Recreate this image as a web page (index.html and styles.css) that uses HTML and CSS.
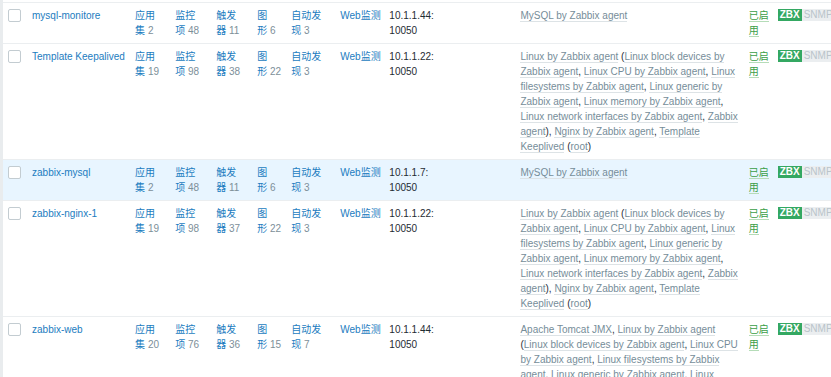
FILE: index.html
```html
<!DOCTYPE html>
<html lang="zh">
<head>
<meta charset="utf-8">
<title>主机</title>
<link rel="stylesheet" href="styles.css">
</head>
<body>
<div class="page">
  <div class="side"></div>
  <div class="main">
    <table class="list">
      <colgroup>
        <col class="c-cb"><col class="c-name"><col class="c-app"><col class="c-item"><col class="c-trig"><col class="c-graph"><col class="c-disc"><col class="c-web"><col class="c-if"><col class="c-tpl"><col class="c-st"><col class="c-av">
      </colgroup>
      <tbody>
        <tr>
          <td><span class="cb"></span></td>
          <td><a class="lnk">mysql-monitore</a></td>
          <td><a class="lnk">应用</a><br><a class="lnk">集</a> <span class="num">2</span></td>
          <td><a class="lnk">监控</a><br><a class="lnk">项</a> <span class="num">48</span></td>
          <td><a class="lnk">触发</a><br><a class="lnk">器</a> <span class="num">11</span></td>
          <td><a class="lnk">图</a><br><a class="lnk">形</a> <span class="num">6</span></td>
          <td><a class="lnk">自动发</a><br><a class="lnk">现</a> <span class="num">3</span></td>
          <td><a class="lnk">Web监测</a></td>
          <td class="ip">10.1.1.44:<br>10050</td>
          <td class="tpl"><a class="t">MySQL by Zabbix agent</a></td>
          <td><a class="st">已启</a><br><a class="st">用</a></td>
          <td class="av"><span class="b on">ZBX</span><span class="b off">SNMP</span><span class="b off">JMX</span><span class="b off">IPMI</span></td>
        </tr>
        <tr>
          <td><span class="cb"></span></td>
          <td><a class="lnk">Template Keepalived</a></td>
          <td><a class="lnk">应用</a><br><a class="lnk">集</a> <span class="num">19</span></td>
          <td><a class="lnk">监控</a><br><a class="lnk">项</a> <span class="num">98</span></td>
          <td><a class="lnk">触发</a><br><a class="lnk">器</a> <span class="num">38</span></td>
          <td><a class="lnk">图</a><br><a class="lnk">形</a> <span class="num">22</span></td>
          <td><a class="lnk">自动发</a><br><a class="lnk">现</a> <span class="num">3</span></td>
          <td><a class="lnk">Web监测</a></td>
          <td class="ip">10.1.1.22:<br>10050</td>
          <td class="tpl"><a class="t">Linux by Zabbix agent</a> (<a class="t">Linux block devices by Zabbix agent</a>, <a class="t">Linux CPU by Zabbix agent</a>, <a class="t">Linux filesystems by Zabbix agent</a>, <a class="t">Linux generic by Zabbix agent</a>, <a class="t">Linux memory by Zabbix agent</a>, <a class="t">Linux network interfaces by Zabbix agent</a>, <a class="t">Zabbix agent</a>), <a class="t">Nginx by Zabbix agent</a>, <a class="t">Template Keeplived</a> (<a class="t">root</a>)</td>
          <td><a class="st">已启</a><br><a class="st">用</a></td>
          <td class="av"><span class="b on">ZBX</span><span class="b off">SNMP</span><span class="b off">JMX</span><span class="b off">IPMI</span></td>
        </tr>
        <tr class="hl">
          <td><span class="cb"></span></td>
          <td><a class="lnk">zabbix-mysql</a></td>
          <td><a class="lnk">应用</a><br><a class="lnk">集</a> <span class="num">2</span></td>
          <td><a class="lnk">监控</a><br><a class="lnk">项</a> <span class="num">48</span></td>
          <td><a class="lnk">触发</a><br><a class="lnk">器</a> <span class="num">11</span></td>
          <td><a class="lnk">图</a><br><a class="lnk">形</a> <span class="num">6</span></td>
          <td><a class="lnk">自动发</a><br><a class="lnk">现</a> <span class="num">3</span></td>
          <td><a class="lnk">Web监测</a></td>
          <td class="ip">10.1.1.7:<br>10050</td>
          <td class="tpl"><a class="t">MySQL by Zabbix agent</a></td>
          <td><a class="st">已启</a><br><a class="st">用</a></td>
          <td class="av"><span class="b on">ZBX</span><span class="b off">SNMP</span><span class="b off">JMX</span><span class="b off">IPMI</span></td>
        </tr>
        <tr>
          <td><span class="cb"></span></td>
          <td><a class="lnk">zabbix-nginx-1</a></td>
          <td><a class="lnk">应用</a><br><a class="lnk">集</a> <span class="num">19</span></td>
          <td><a class="lnk">监控</a><br><a class="lnk">项</a> <span class="num">98</span></td>
          <td><a class="lnk">触发</a><br><a class="lnk">器</a> <span class="num">37</span></td>
          <td><a class="lnk">图</a><br><a class="lnk">形</a> <span class="num">22</span></td>
          <td><a class="lnk">自动发</a><br><a class="lnk">现</a> <span class="num">3</span></td>
          <td><a class="lnk">Web监测</a></td>
          <td class="ip">10.1.1.22:<br>10050</td>
          <td class="tpl"><a class="t">Linux by Zabbix agent</a> (<a class="t">Linux block devices by Zabbix agent</a>, <a class="t">Linux CPU by Zabbix agent</a>, <a class="t">Linux filesystems by Zabbix agent</a>, <a class="t">Linux generic by Zabbix agent</a>, <a class="t">Linux memory by Zabbix agent</a>, <a class="t">Linux network interfaces by Zabbix agent</a>, <a class="t">Zabbix agent</a>), <a class="t">Nginx by Zabbix agent</a>, <a class="t">Template Keeplived</a> (<a class="t">root</a>)</td>
          <td><a class="st">已启</a><br><a class="st">用</a></td>
          <td class="av"><span class="b on">ZBX</span><span class="b off">SNMP</span><span class="b off">JMX</span><span class="b off">IPMI</span></td>
        </tr>
        <tr>
          <td><span class="cb"></span></td>
          <td><a class="lnk">zabbix-web</a></td>
          <td><a class="lnk">应用</a><br><a class="lnk">集</a> <span class="num">20</span></td>
          <td><a class="lnk">监控</a><br><a class="lnk">项</a> <span class="num">76</span></td>
          <td><a class="lnk">触发</a><br><a class="lnk">器</a> <span class="num">36</span></td>
          <td><a class="lnk">图</a><br><a class="lnk">形</a> <span class="num">15</span></td>
          <td><a class="lnk">自动发</a><br><a class="lnk">现</a> <span class="num">7</span></td>
          <td><a class="lnk">Web监测</a></td>
          <td class="ip">10.1.1.44:<br>10050</td>
          <td class="tpl"><a class="t">Apache Tomcat JMX</a>, <a class="t">Linux by Zabbix agent</a> (<a class="t">Linux block devices by Zabbix agent</a>, <a class="t">Linux CPU by Zabbix agent</a>, <a class="t">Linux filesystems by Zabbix agent</a>, <a class="t">Linux generic by Zabbix agent</a>, <a class="t">Linux memory by Zabbix agent</a>, <a class="t">Linux network interfaces by Zabbix agent</a>, <a class="t">Zabbix agent</a>)</td>
          <td><a class="st">已启</a><br><a class="st">用</a></td>
          <td class="av"><span class="b on">ZBX</span><span class="b off">SNMP</span><span class="b off">JMX</span><span class="b off">IPMI</span></td>
        </tr>
      </tbody>
    </table>
  </div>
</div>
</body>
</html>
```
FILE: styles.css
```css
html, body {
  margin: 0;
  padding: 0;
  height: 100%;
  overflow: hidden;
  background: #ffffff;
}
body {
  font-family: "Liberation Sans", Arial, "Noto Sans CJK SC", sans-serif;
  font-size: 10px;
  line-height: 15px;
  color: #1f2c33;
}
.page {
  display: flex;
  height: 100%;
}
.side {
  flex: 0 0 3px;
  background: #e9ecee;
}
.main {
  flex: 1 1 auto;
  overflow: hidden;
  padding-top: 2px;
}
.list {
  border-collapse: collapse;
  table-layout: fixed;
  width: 1000px;
  border-top: 1px solid #ebeef0;
}
.list td {
  padding: 5px 5px;
  vertical-align: top;
  border-bottom: 1px solid #ebeef0;
  white-space: nowrap;
  overflow: visible;
}
.list td.tpl {
  white-space: normal;
}
.list tr.hl td {
  background: #e8f5ff;
}
.c-cb { width: 24px; }
.c-name { width: 103px; }
.c-app { width: 40px; }
.c-item { width: 41px; }
.c-trig { width: 41px; }
.c-graph { width: 34px; }
.c-disc { width: 49px; }
.c-web { width: 49px; }
.c-if { width: 131px; }
.c-tpl { width: 228px; }
.c-st { width: 29px; }
.c-av { width: 230px; }

.cb {
  display: block;
  width: 11px;
  height: 11px;
  margin-top: 1px;
  border: 1px solid #c3ccd1;
  border-radius: 2px;
  background: #ffffff;
}
.lnk {
  color: #1b7cc0;
  text-decoration: none;
}
.num {
  color: #7d8f99;
}
.ip {
  color: #1f2c33;
}
.tpl {
  color: #1f2c33;
}
.t {
  color: #768d99;
  border-bottom: 1px solid #dde3e6;
}
.st {
  color: #3a9e47;
  border-bottom: 1px solid #b5dcb8;
}
.av {
  white-space: nowrap;
}
.b {
  display: inline-block;
  vertical-align: top;
  margin-top: 1px;
  height: 12px;
  line-height: 12px;
  padding: 0 2px;
  font-size: 10px;
}
.b.on {
  background: #34a862;
  color: #ffffff;
  font-weight: bold;
}
.b.off {
  background: #ebeef0;
  color: #b9c4ca;
}
```
